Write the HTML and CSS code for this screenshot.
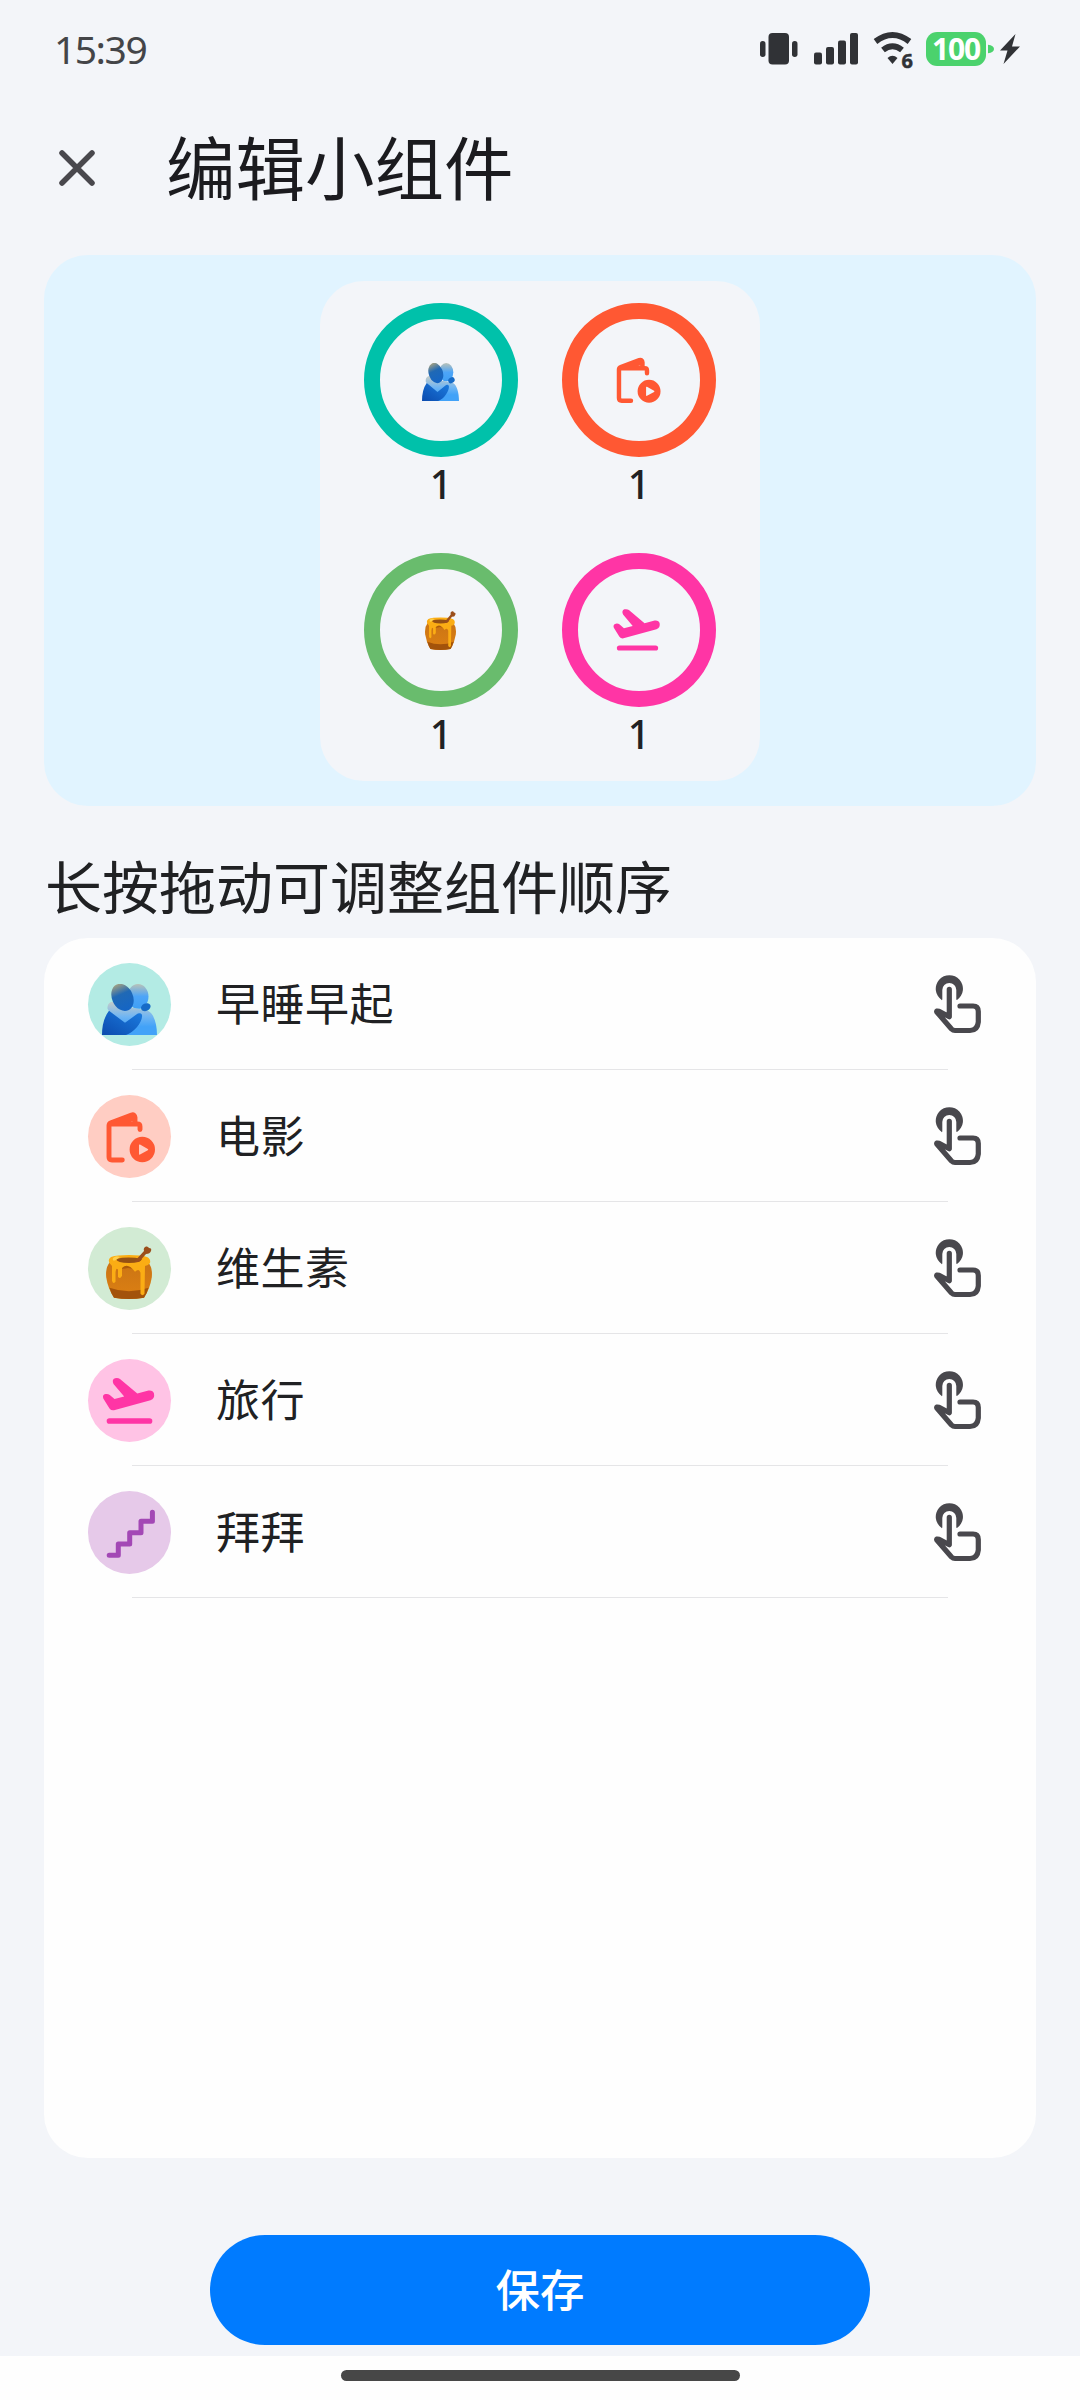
FILE: index.html
```html
<!DOCTYPE html>
<html lang="zh-CN">
<head>
<meta charset="utf-8">
<title>编辑小组件</title>
<link rel="stylesheet" href="styles.css">
</head>
<body>
<svg class="defs" aria-hidden="true">
  <defs>
    <linearGradient id="back" x1="0" y1="0" x2="0" y2="1"><stop offset="0" stop-color="#b9c2b8"/><stop offset=".5" stop-color="#4da5f8"/><stop offset="1" stop-color="#3f9ff5"/></linearGradient>
    <linearGradient id="backBody" x1="0" y1="0" x2="0" y2="1"><stop offset="0" stop-color="#c4ccc9"/><stop offset=".45" stop-color="#6fb5f3"/><stop offset=".75" stop-color="#42a2f8"/></linearGradient>
    <linearGradient id="front" x1="0" y1="0" x2="0" y2="1"><stop offset="0" stop-color="#a09f83"/><stop offset=".38" stop-color="#2069b5"/><stop offset="1" stop-color="#1465c6"/></linearGradient>
    <linearGradient id="frontBody" x1="0" y1="1" x2="1" y2="0"><stop offset="0" stop-color="#0b4bae"/><stop offset="1" stop-color="#1c7de0"/></linearGradient>
    <linearGradient id="pot" x1="0" y1="0" x2="0" y2="1"><stop offset="0" stop-color="#cb7414"/><stop offset="1" stop-color="#dc8013"/></linearGradient>
  </defs>
  <symbol id="people" viewBox="0 0 55 51.3" preserveAspectRatio="none">
    <ellipse cx="36" cy="12.5" rx="10.500" ry="12.5" fill="url(#back)"/>
    <path d="M9 18Q5 20 5.500 25L22 51.300H55C55 40 52 30 46 27L31 24Q18 27 11 18Z" fill="url(#backBody)"/>
    <path d="M7 27Q0 36 0 51.300H24C32 49 41 38 40 31Q38 28 34 31L23 39Z" fill="url(#frontBody)"/>
    <ellipse cx="20.500" cy="13.500" rx="10.500" ry="14.200" transform="rotate(-24 20.500 13.500)" fill="url(#front)"/>
    <ellipse cx="43.800" cy="23.300" rx="5" ry="3.800" transform="rotate(-25 43.800 23.300)" fill="#176bc7"/>
  </symbol>
  <symbol id="honey" viewBox="0 0 46 53.3" preserveAspectRatio="none">
    <path d="M4 16Q-1 22 .3 32Q2 43 8 52Q23 54.500 38 52Q44 43 45.700 32Q47 22 42 16Z" fill="url(#pot)"/>
    <path d="M3.500 42Q23 49 42.500 42Q41 48 38 52Q23 54.500 8 52Q5 48 3.500 42Z" fill="#a3530b"/>
    <path d="M6 17H40Q34 25 22 22Q12 25 6 17Z" fill="#ad5b0a"/>
    <path d="M5 11Q11 9 23 9Q35 9 41 11Q45 13 44 17Q42 20 39 20L38.500 48Q36.500 51 34.500 48V27Q33 22 29 26Q22 16 16 22V30Q14 34 12 31V24Q10 21 9.500 27V36Q7 39 6 35V20Q0 15 5 11Z" fill="#fbad14"/>
    <path d="M10 13Q22 10 36 13Q35 17 23 17Q11 17 10 13Z" fill="#955013"/>
    <path d="M28 16L38 5Q37 2 40 .5Q42 0 43 2Q46 2 45 5Q44 8 40 8L33 16Z" fill="#9b4e1b"/>
    <path d="M7 12Q10 9 14 11L10 14Q6 16 7 12Z" fill="#ffd04b"/>
  </symbol>
  <symbol id="movie" viewBox="0 0 83 83">
    <path d="M34.300 65H24Q21 65 21 62V30.500Q21 28.500 23 27.700L43.500 20Q46.700 19 47 22.500V28.500M21.500 29H49.500Q52 29 52 31.500V34.500M23 28.500L46.500 23" fill="none" stroke="currentColor" stroke-width="4.900" stroke-linecap="round" stroke-linejoin="round"/>
    <path fill-rule="evenodd" d="M54.300 41.800A12.700 12.700 0 1 1 54.300 67.200A12.700 12.700 0 1 1 54.300 41.800ZM51 50.200V58.900Q51 60 52 59.500L59.800 55.300Q60.800 54.600 59.800 54L52 49.600Q51 49.200 51 50.200Z" fill="currentColor"/>
  </symbol>
  <symbol id="plane" viewBox="0 0 83 83">
    <path d="M25.500 25Q23.500 20.500 27 19.200Q30 18.500 32 20L49.300 34.500L60.500 31.500Q65 31 66 34.500Q67 39.500 62.500 41.200L26 51.300Q23 51.700 21.500 49.500L15.300 39.500Q14 35.800 17.500 35Q20 34.500 21.800 36L26.500 40L36.200 37.500Z" fill="currentColor"/>
    <path d="M21.500 62H61.500" stroke="currentColor" stroke-width="5.700" stroke-linecap="round"/>
  </symbol>
  <symbol id="stairs" viewBox="0 0 83 83">
    <path d="M21.200 64.300H30.300V53H41.700V41.700H53V30.300H64.400V21.300" fill="none" stroke="currentColor" stroke-width="5" stroke-linecap="round" stroke-linejoin="round"/>
  </symbol>
  <symbol id="press" viewBox="0 0 52 60">
    <path d="M10.700 26A13.600 13.600 0 1 1 26 26Q25.300 26.200 25.300 25V16A7 7 0 0 0 11.300 16V25Q11.300 26.500 10.700 26Z" fill="currentColor"/>
    <path d="M29 32H42Q47.300 32 47.300 37.500V48Q46.500 56.500 39 56.500H24Q22 56.500 20.500 55L5.800 38Q5 36.500 8 37.200L18.300 42.800V15.300" fill="none" stroke="currentColor" stroke-width="5.200" stroke-linecap="round" stroke-linejoin="round"/>
  </symbol>
</svg>

<main class="screen">
  <header class="status">
    <span class="clock">15:39</span>
    <div class="status-icons">
      <svg class="vibrate" viewBox="0 0 38 34"><rect x="8.500" y="1" width="20.500" height="31.500" rx="4"/><rect x="0" y="9" width="5.500" height="16" rx="2.700"/><rect x="32" y="9" width="5.500" height="16" rx="2.700"/></svg>
      <svg class="signal" viewBox="0 0 44 34"><rect y="20.500" width="8" height="12" rx="2"/><rect x="12" y="15" width="8" height="17.500" rx="2"/><rect x="24" y="8.500" width="8" height="24" rx="2"/><rect x="36" y="1" width="8" height="31.500" rx="2"/></svg>
      <svg class="wifi" viewBox="0 0 42 38"><path d="M2.500 9.500Q19.500-3.500 36.500 9.500M10 18Q19.500 10.500 29 18" fill="none" stroke="#303236" stroke-width="6"/><path d="M14.500 26Q19.500 21.500 24.500 26L19.500 32Z"/><text x="28.500" y="35.500">6</text></svg>
      <div class="battery">100</div>
      <svg class="nub" viewBox="0 0 7 12"><path d="M0 1Q7 2 7 6Q7 10 0 11Z"/></svg>
      <svg class="bolt" viewBox="0 0 20 30"><path d="M15.500 0L0 16.500H7.500L3.500 30L20 12.500H12Z"/></svg>
    </div>
  </header>

  <div class="titlebar">
    <svg class="close" viewBox="0 0 36 36"><path d="M3 3L33 33M33 3L3 33"/></svg>
    <h1>编辑小组件</h1>
  </div>

  <section class="preview">
    <div class="widget">
      <div class="cell"><div class="ring teal"><svg class="mini-people"><use href="#people"/></svg></div><b>1</b></div>
      <div class="cell"><div class="ring orange"><svg class="mini"><use href="#movie"/></svg></div><b>1</b></div>
      <div class="cell"><div class="ring green"><svg class="mini-honey"><use href="#honey"/></svg></div><b>1</b></div>
      <div class="cell"><div class="ring pink"><svg class="mini"><use href="#plane"/></svg></div><b>1</b></div>
    </div>
  </section>

  <h2>长按拖动可调整组件顺序</h2>

  <ul class="list">
    <li><div class="badge teal"><svg class="people"><use href="#people"/></svg></div><span>早睡早起</span><svg class="press"><use href="#press"/></svg></li>
    <li><div class="badge orange"><svg class="glyph"><use href="#movie"/></svg></div><span>电影</span><svg class="press"><use href="#press"/></svg></li>
    <li><div class="badge green"><svg class="honey"><use href="#honey"/></svg></div><span>维生素</span><svg class="press"><use href="#press"/></svg></li>
    <li><div class="badge pink"><svg class="glyph"><use href="#plane"/></svg></div><span>旅行</span><svg class="press"><use href="#press"/></svg></li>
    <li><div class="badge purple"><svg class="glyph"><use href="#stairs"/></svg></div><span>拜拜</span><svg class="press"><use href="#press"/></svg></li>
  </ul>

  <button class="save" type="button">保存</button>
  <footer class="nav"><div class="handle"></div></footer>
</main>
</body>
</html>
```
FILE: styles.css
```css
* { box-sizing: border-box; }
body {
  margin: 0;
  background: #f3f5f9;
  color: #202123;
  font-family: "Noto Sans", "Noto Sans CJK SC", sans-serif;
}
svg { display: block; flex: none; }
.defs { position: absolute; width: 0; height: 0; }
.screen {
  width: 1080px;
  height: 2400px;
  display: flex;
  flex-direction: column;
}
h1, h2, ul { margin: 0; padding: 0; font-weight: 400; }
h1, h2, li span, .save { font-family: "Noto Sans CJK SC", sans-serif; }

.status {
  height: 98px;
  padding: 0 60px 0 54px;
  display: flex;
  align-items: center;
  justify-content: space-between;
}
.clock {
  margin-top: -1px;
  font-size: 39px;
  line-height: 54px;
  letter-spacing: -1.5px;
  color: #444548;
}
.status-icons { display: flex; align-items: center; fill: #303236; }
.vibrate { width: 38px; height: 34px; margin-right: 16px; }
.signal { width: 44px; height: 34px; margin-right: 15px; }
.wifi { width: 42px; height: 38px; margin: 4px 11px 0 0; overflow: visible; }
.wifi text { font: 700 20px "Open Sans", sans-serif; stroke: #303236; stroke-width: .5px; }
.battery {
  width: 60px;
  height: 34px;
  margin-right: 2px;
  border-radius: 11px;
  background: #4bd26d;
  color: #fff;
  font-size: 30px;
  font-weight: 700;
  line-height: 33px;
  letter-spacing: -1.2px;
  text-align: center;
}
.nub { width: 6px; height: 12px; margin-right: 6px; fill: #4bd26d; }
.bolt { width: 20px; height: 30px; }

.titlebar {
  height: 157px;
  padding: 0 0 17px 59px;
  display: flex;
  align-items: center;
  gap: 71px;
}
.close {
  width: 36px;
  height: 36px;
  fill: none;
  stroke: #49484d;
  stroke-width: 5.5;
  stroke-linecap: round;
}
h1 { font-size: 69.5px; line-height: 100px; margin-top: -6px; color: #1b1b1f; }

.preview {
  height: 551px;
  margin: 0 44px;
  border-radius: 44px;
  background: #e1f4ff;
  display: flex;
  justify-content: center;
  align-items: center;
}
.widget {
  width: 440px;
  height: 500px;
  padding: 22px 44px 0;
  border-radius: 44px;
  background: #f3f5f9;
  display: grid;
  grid-template-columns: 154px 154px;
  grid-template-rows: 250px 250px;
  column-gap: 44px;
}
.cell { display: flex; flex-direction: column; align-items: center; }
.ring {
  width: 154px;
  height: 154px;
  border: 16px solid currentColor;
  border-radius: 50%;
  display: flex;
  align-items: center;
  justify-content: center;
}
.cell b { font-size: 39px; font-weight: 500; line-height: 54px; }
.mini { width: 75px; height: 75px; margin-right: 3px; }
.mini-people { width: 37px; height: 38px; margin: 4px 2px 0 0; }
.mini-honey { width: 31px; height: 39px; margin: 1px 1px 0 0; }

.teal { color: #00c1aa; }
.orange { color: #ff5833; }
.green { color: #69bc6d; }
.pink { color: #ff35a5; }
.purple { color: #a348b5; }

h2 { height: 132px; padding: 36px 0 0 45px; font-size: 57px; line-height: 84px; }

.list {
  height: 1220px;
  margin: 0 44px;
  border-radius: 44px;
  background: #fefefe;
  list-style: none;
}
.list li {
  height: 132px;
  padding: 0 53px 0 44px;
  display: flex;
  align-items: center;
  background: linear-gradient(#e5e5e7, #e5e5e7) 88px 131px / 816px 1px no-repeat;
}
.badge {
  width: 83px;
  height: 83px;
  border-radius: 50%;
  display: flex;
  align-items: center;
  justify-content: center;
}
.badge.teal { background: #b3ebe4; }
.badge.orange { background: #ffcdc3; }
.badge.green { background: #d2ebd4; }
.badge.pink { background: #ffc3e5; }
.badge.purple { background: #e6c9e9; }
.glyph { width: 83px; height: 83px; }
.people { width: 55px; height: 51px; margin-top: 10px; }
.honey { width: 46px; height: 53px; margin: 9px 1px 0 0; }
.list span { flex: 1; margin: -4px 0 0 45px; font-size: 44px; line-height: 64px; letter-spacing: .5px; }
.press { width: 52px; height: 60px; color: #49484d; }

.save {
  width: 660px;
  height: 110px;
  margin: 77px auto 0;
  padding: 0 0 5px;
  border: 0;
  border-radius: 55px;
  background: #007bff;
  color: #fff;
  font-size: 44.5px;
  font-weight: 500;
}
.nav {
  height: 44px;
  margin-top: auto;
  padding-top: 14px;
  background: #fefefe;
}
.handle {
  width: 399px;
  height: 11px;
  margin: 0 auto;
  border-radius: 5.5px;
  background: #474747;
}
```
